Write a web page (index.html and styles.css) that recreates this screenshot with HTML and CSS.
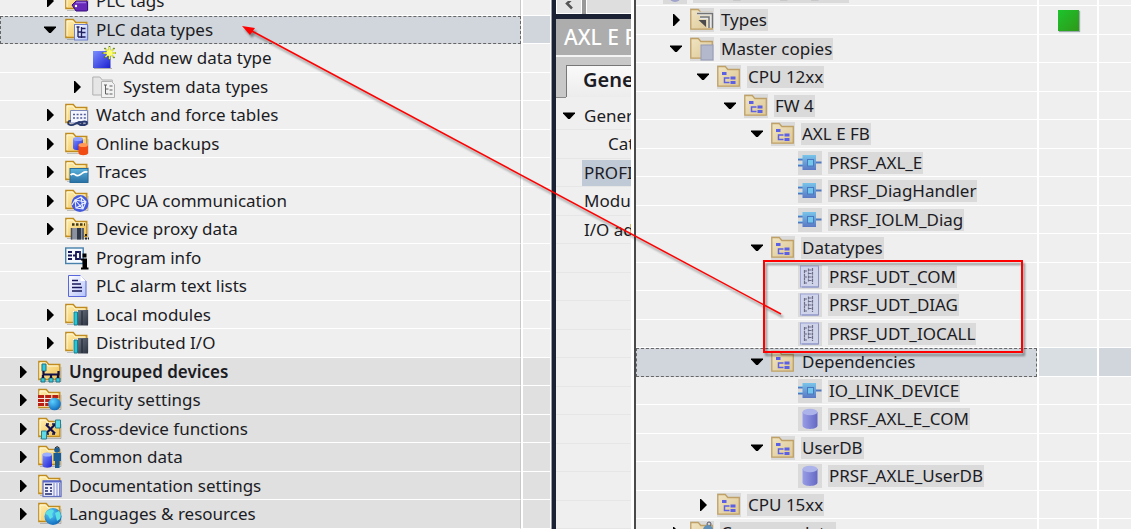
FILE: index.html
```html
<!DOCTYPE html>
<html lang="en">
<head>
<meta charset="utf-8">
<title>Project tree and library</title>
<link rel="stylesheet" href="styles.css">
</head>
<body>
<svg class="defs" aria-hidden="true">
  <defs>
    <linearGradient id="gold" x1="0" y1="0" x2="1" y2="1"><stop offset="0" stop-color="#fff0b4"/><stop offset="1" stop-color="#f0c050"/></linearGradient>
    <linearGradient id="pale" x1="0" y1="0" x2="1" y2="1"><stop offset="0" stop-color="#f0e4c2"/><stop offset="1" stop-color="#ddc896"/></linearGradient>
    <linearGradient id="blue" x1="0" y1="0" x2="1" y2="1"><stop offset="0" stop-color="#7c90ff"/><stop offset="1" stop-color="#1c20d0"/></linearGradient>
    <linearGradient id="fb" x1="0" y1="0" x2="0" y2="1"><stop offset="0" stop-color="#78c4ea"/><stop offset="1" stop-color="#5a78c4"/></linearGradient>
    <linearGradient id="cyl" x1="0" y1="0" x2="1" y2="0"><stop offset="0" stop-color="#9a9ee6"/><stop offset="1" stop-color="#6468c4"/></linearGradient>
    <linearGradient id="page" x1="0" y1="0" x2="1" y2="1"><stop offset="0" stop-color="#ffffff"/><stop offset="1" stop-color="#b4c2fa"/></linearGradient>
    <linearGradient id="slate" x1="0" y1="0" x2="1" y2="1"><stop offset="0" stop-color="#6a7282"/><stop offset="1" stop-color="#2c3340"/></linearGradient>
    <linearGradient id="wave" x1="0" y1="0" x2="0" y2="1"><stop offset="0" stop-color="#5cb4dc"/><stop offset="1" stop-color="#2870a4"/></linearGradient>
    <radialGradient id="globe" cx=".35" cy=".3" r=".8"><stop offset="0" stop-color="#5cd0ff"/><stop offset="1" stop-color="#0862b8"/></radialGradient>
    <symbol id="folder" viewBox="0 0 24 24"><path d="M2 21.500h21V7" fill="none" stroke="#0003"/><path d="M.8 19.500V1.500h7.500l2.500 3h11v15z" fill="url(#gold)" stroke="#c08c20" stroke-width="1.300"/><path d="M2 18V3h5.500l2.500 3h10" fill="none" stroke="#fff8d8"/></symbol>
    <symbol id="pfolder" viewBox="0 0 24 24"><path d="M.8 21.200V1.500h7.500l2.500 3h11.500v16.700z" fill="url(#pale)" stroke="#bfa066" stroke-width="1.300"/></symbol>
    <symbol id="group" viewBox="0 0 24 24"><use href="#pfolder"/><path d="M5 7h4.500v3H5zM13.500 11.500h5v3h-5zM13.500 16h5v3h-5z" fill="#5c60e4"/><path d="M12.500 13H7.500v4.500h5" fill="none" stroke="#5c60e4" stroke-width="1.500"/></symbol>
    <symbol id="block" viewBox="0 0 24 24"><path d="M0 8.500h5M0 14.500h5M17 11.500h6.500" stroke="#5078c0" stroke-width="2"/><path d="M0 7.500h5M0 13.500h5" stroke="#8cc4e8"/><rect x="4.500" y="4" width="13.500" height="15" fill="url(#fb)"/><rect x="9.500" y="8.500" width="6" height="6.500" fill="#72c6ec" stroke="#4878c0"/></symbol>
    <symbol id="udt" viewBox="0 0 24 24"><rect x="2.500" y="1" width="18" height="21" fill="#d0d4ea" stroke="#9ca4d4"/><path d="M20.500 2v20H4" fill="none" stroke="#8890c4"/><path d="M6.500 5v14M6.500 6H9M6.500 12H9M6.500 18H9M10.500 3.500v6M10.500 10.500v6M10.500 5H15M10.500 8.500H15M10.500 12H15M10.500 15.500H15M14.500 3v16" fill="none" stroke="#6c6c88" stroke-width="1.200" stroke-dasharray="3 .7"/></symbol>
    <symbol id="db" viewBox="0 0 24 24"><path d="M4.500 5v13.500c0 4.500 15 4.500 15 0V5z" fill="url(#cyl)"/><ellipse cx="12" cy="5" rx="7.500" ry="3.300" fill="#acb2ea"/></symbol>
    <symbol id="module" viewBox="0 0 24 24"><use href="#folder"/><path d="M8 8h6v14H8z" fill="#fff"/><path d="M9 9h3.500v13H9z" fill="#20c8d8" stroke="#207888"/><rect x="13" y="7" width="10" height="15.500" fill="url(#slate)"/><path d="M17 8v14" stroke="#1c222c"/></symbol>
    <symbol id="tags" viewBox="0 0 24 24"><use href="#folder"/><path d="M7 16l4-4h10.500q1 0 1 1v8q0 1-1 1H11z" fill="#6828b8" stroke="#35107c"/><path d="M11 13.500h10" stroke="#a070e0" stroke-width="1.500"/><circle cx="11" cy="17" r="1.200" fill="#fff"/></symbol>
    <symbol id="types" viewBox="0 0 24 24"><use href="#folder"/><rect x="9.500" y="6.500" width="13" height="15.500" fill="url(#page)" stroke="#7080c8"/><path d="M11.500 9h3M13 9v10M13 14h3M13 19h3M17 10.500h3.500M17 14.500h3.500M17 19h3.500M16.500 9v11" stroke="#202060" stroke-width="1.300" fill="none"/></symbol>
    <symbol id="gtypes" viewBox="0 0 24 24"><path d="M.8 20V2h7l2.500 3h10v15z" fill="#e6e6e6" stroke="#b0b0b0"/><path d="M9.500 6.500h10l3 3v13h-13z" fill="#f2f2f2" stroke="#b0b0b0"/><path d="M12 10h3M13.500 10v9M13.500 14h3M13.500 19h3M17.500 11h3M17.500 15h3M17.500 19h3" stroke="#606060" fill="none"/></symbol>
    <symbol id="new" viewBox="0 0 24 24"><path d="M2 22.500h18" stroke="#0004"/><rect x="1" y="5" width="17.500" height="17" fill="url(#blue)"/><path d="M17.500 0v14M10.500 7h14M12.500 2l10 10M22.500 2l-10 10" stroke="#587c1c" stroke-width="1.600"/><path d="M17.500 1v12M11.500 7h12M13.500 3l8 8M21.500 3l-8 8" stroke="#f4f440" stroke-width="1.300"/><circle cx="17.500" cy="7" r="3" fill="#ffff70"/></symbol>
    <symbol id="watch" viewBox="0 0 24 24"><use href="#folder"/><path d="M5.500 7.500h17V20h-17z" fill="#f4f6ff" stroke="#7c88b8"/><path d="M8 11.500h14M8 15h14" stroke="#505c98" stroke-width="1.500" stroke-dasharray="2 1.600"/><path d="M6 18c-3-1-4 3-1 4 4 1 5-2 7-2s2 2 4 2 2-3-1-3-2 1-3 1M16 20c1-2 6-2 6 0s-5 3-6 1" fill="none" stroke="#26386c" stroke-width="1.800"/></symbol>
    <symbol id="backup" viewBox="0 0 24 24"><use href="#folder"/><path d="M8 7v9c0 3 10 3 10 0V7z" fill="url(#blue)"/><ellipse cx="13" cy="7" rx="5" ry="2" fill="#8ea0ff"/><path d="M13.500 13v8c0 3 9.500 3 9.500 0v-8z" fill="#f04c14"/><ellipse cx="18.200" cy="13" rx="4.700" ry="2" fill="#ff9a58"/></symbol>
    <symbol id="trace" viewBox="0 0 24 24"><use href="#folder"/><rect x="5" y="8.500" width="18" height="14" fill="url(#wave)" stroke="#286c9c"/><path d="M5.500 15c5-4 4 3 9 0s4-4 8-3" fill="none" stroke="#fff" stroke-width="1.700"/></symbol>
    <symbol id="opc" viewBox="0 0 24 24"><use href="#folder"/><circle cx="15" cy="14.500" r="8.500" fill="#4458dc"/><path d="M10 11l6-3 5 5-3 7-7-1zM10 11l11 2M16 8l2 12M11 19l10-6M7 16l3-5 8 9" fill="none" stroke="#e4ecff" stroke-width="1.100"/></symbol>
    <symbol id="proxy" viewBox="0 0 24 24"><use href="#folder"/><path d="M7 7.500h13" stroke="#403818" stroke-width="2.500" stroke-dasharray="2.500 1.500"/><rect x="6" y="11" width="13" height="11.500" fill="#8c92a0"/><path d="M12 11h4v11.500h-4z" fill="#303848"/><path d="M6.500 11v11.500M18 11v11.500" stroke="#48505e" stroke-width="1.500"/><path d="M20 18h3M20 21.500h4" stroke="#222" stroke-width="2" stroke-dasharray="2 1"/></symbol>
    <symbol id="info" viewBox="0 0 24 24"><rect x=".7" y="2" width="17.500" height="15.500" fill="#f4faff" stroke="#4880ac" stroke-width="1.400"/><path d="M3 6h4M3 9.500h4M3 13h4M8 9.500h3M11 5v9M15 5v9M11 6h3M11 13h3" stroke="#181858" stroke-width="1.800"/><path d="M17.500 7.500h4v4h-4zM16 12.500h6v9h1.500v2H16v-2h1.500v-7H16z" fill="#000"/></symbol>
    <symbol id="list" viewBox="0 0 24 24"><path d="M3.500 1.500h12l5.500 5.500v15.500H3.500z" fill="url(#page)" stroke="#5868dc"/><path d="M15.500 1v6H21z" fill="#fff"/><path d="M7 6.500h6M7 10h9M7 13.500h10M7 17h10" stroke="#181858" stroke-width="1.700"/></symbol>
    <symbol id="devices" viewBox="0 0 24 24"><use href="#folder"/><path d="M4 4h4v7H4zM3 18h4v4H3zM11 18h4v4h-4zM18 18h4v4h-4z" fill="#30c8dc" stroke="#247080"/><path d="M5.500 11v3.500h15V11M5 15v3M13 15v3M20 15v3" fill="none" stroke="#101048" stroke-width="2.200"/></symbol>
    <symbol id="security" viewBox="0 0 24 24"><use href="#folder"/><path d="M0 7.500h14v11H0z" fill="#f6e4dc"/><path d="M0 8.500h22M0 12.500h14M0 16.500h14" stroke="#b82014" stroke-width="2.800" stroke-dasharray="6 1.200"/><circle cx="16.500" cy="16" r="6.300" fill="url(#globe)"/></symbol>
    <symbol id="cross" viewBox="0 0 24 24"><use href="#folder"/><path d="M8 7.500l9 9M17 7.500l-9 9" stroke="#101050" stroke-width="2.200"/><path d="M8 7h3M14 7h3M8 17h3M14 17h3" stroke="#101050" stroke-width="1.500"/><path d="M17.500 3h5v8h-5zM3.500 14h5v8h-5z" fill="#60dce8" stroke="#288090"/></symbol>
    <symbol id="common" viewBox="0 0 24 24"><use href="#folder"/><path d="M4.500 9.500v11c0 3 9.500 3 9.500 0v-11z" fill="url(#blue)"/><ellipse cx="9.200" cy="9.500" rx="4.700" ry="2" fill="#9cb0ff"/><circle cx="19" cy="5" r="2.800" fill="#1c5c94"/><path d="M15.500 8h7.500v8h-1.500v7H17v-7h-1.500z" fill="#1c5c94"/><path d="M17 3q2-3 4.500 0" fill="none" stroke="#222"/></symbol>
    <symbol id="docs" viewBox="0 0 24 24"><use href="#folder"/><rect x="5" y="7" width="18" height="15.500" fill="#eef0ff" stroke="#6470c0" stroke-width="1.300"/><path d="M7 10.500h7M7 14h3M7 17h3M7 20h7M12 14h2M12 17h2" stroke="#202868" stroke-width="1.600"/><path d="M16 9v13M19 9v13M21.500 9v13" stroke="#7c86cc"/><path d="M5 7.500h18" stroke="#5866c8" stroke-width="2"/></symbol>
    <symbol id="lang" viewBox="0 0 24 24"><use href="#folder"/><circle cx="15" cy="14.500" r="8.500" fill="url(#globe)"/><path d="M9 9q5-3 7 0l-2 3 1 3-3 2-2-4-3-1zM17 11l4-2q3 4 1 8l-3 2-1-4z" fill="#5ce0e4"/></symbol>
    <symbol id="libtypes" viewBox="0 0 24 24"><use href="#pfolder"/><path d="M7 5.500h15.500V20M10 9.500h9V20" fill="none" stroke="#e8e8e8" stroke-width="3.500"/><path d="M7 5.500h15.500V20M10 9h9v11" fill="none" stroke="#747474" stroke-width="1.500"/><path d="M8.500 12H16v7z" fill="#4c4c4c"/></symbol>
    <symbol id="master" viewBox="0 0 24 24"><use href="#pfolder"/><rect x="11" y="8" width="12" height="15" fill="#b4b8cc" stroke="#9499b4"/></symbol>
    <symbol id="libcommon" viewBox="0 0 24 24"><use href="#pfolder"/><circle cx="19" cy="3" r="2" fill="none" stroke="#556"/><circle cx="18" cy="9" r="5" fill="#6090b8"/></symbol>
    <symbol id="lib" viewBox="0 0 24 24"><circle cx="12" cy="16" r="6" fill="#a0a4cc"/></symbol>
    <symbol id="right" viewBox="0 0 12 12"><path d="M3 0h1l6 6-6 6H3z"/></symbol>
    <symbol id="down" viewBox="0 0 12 12"><path d="M0 2.500h12v1L6.800 9H5.200L0 3.500z"/></symbol>
  </defs>
</svg>

<main class="workspace">
  <nav class="tree project" aria-label="Project tree">
    <div class="row l2"><div class="name"><button class="toggle" aria-label="Expand PLC tags"><svg><use href="#right"/></svg></button><svg class="icon"><use href="#tags"/></svg><span class="label">PLC tags</span></div><div class="cell"></div></div>
    <div class="row l2 selected"><div class="name"><button class="toggle" aria-label="Collapse PLC data types"><svg><use href="#down"/></svg></button><svg class="icon"><use href="#types"/></svg><span class="label">PLC data types</span></div><div class="cell"></div></div>
    <div class="row l3"><div class="name"><span class="toggle"></span><svg class="icon"><use href="#new"/></svg><span class="label">Add new data type</span></div><div class="cell"></div></div>
    <div class="row l3"><div class="name"><button class="toggle" aria-label="Expand System data types"><svg><use href="#right"/></svg></button><svg class="icon"><use href="#gtypes"/></svg><span class="label">System data types</span></div><div class="cell"></div></div>
    <div class="row l2"><div class="name"><button class="toggle" aria-label="Expand Watch and force tables"><svg><use href="#right"/></svg></button><svg class="icon"><use href="#watch"/></svg><span class="label">Watch and force tables</span></div><div class="cell"></div></div>
    <div class="row l2"><div class="name"><button class="toggle" aria-label="Expand Online backups"><svg><use href="#right"/></svg></button><svg class="icon"><use href="#backup"/></svg><span class="label">Online backups</span></div><div class="cell"></div></div>
    <div class="row l2"><div class="name"><button class="toggle" aria-label="Expand Traces"><svg><use href="#right"/></svg></button><svg class="icon"><use href="#trace"/></svg><span class="label">Traces</span></div><div class="cell"></div></div>
    <div class="row l2"><div class="name"><button class="toggle" aria-label="Expand OPC UA communication"><svg><use href="#right"/></svg></button><svg class="icon"><use href="#opc"/></svg><span class="label">OPC UA communication</span></div><div class="cell"></div></div>
    <div class="row l2"><div class="name"><button class="toggle" aria-label="Expand Device proxy data"><svg><use href="#right"/></svg></button><svg class="icon"><use href="#proxy"/></svg><span class="label">Device proxy data</span></div><div class="cell"></div></div>
    <div class="row l2"><div class="name"><span class="toggle"></span><svg class="icon"><use href="#info"/></svg><span class="label">Program info</span></div><div class="cell"></div></div>
    <div class="row l2"><div class="name"><span class="toggle"></span><svg class="icon"><use href="#list"/></svg><span class="label">PLC alarm text lists</span></div><div class="cell"></div></div>
    <div class="row l2"><div class="name"><button class="toggle" aria-label="Expand Local modules"><svg><use href="#right"/></svg></button><svg class="icon"><use href="#module"/></svg><span class="label">Local modules</span></div><div class="cell"></div></div>
    <div class="row l2"><div class="name"><button class="toggle" aria-label="Expand Distributed I/O"><svg><use href="#right"/></svg></button><svg class="icon"><use href="#module"/></svg><span class="label">Distributed I/O</span></div><div class="cell"></div></div>
    <div class="row l1 top strong"><div class="name"><button class="toggle" aria-label="Expand Ungrouped devices"><svg><use href="#right"/></svg></button><svg class="icon"><use href="#devices"/></svg><span class="label">Ungrouped devices</span></div><div class="cell"></div></div>
    <div class="row l1 top"><div class="name"><button class="toggle" aria-label="Expand Security settings"><svg><use href="#right"/></svg></button><svg class="icon"><use href="#security"/></svg><span class="label">Security settings</span></div><div class="cell"></div></div>
    <div class="row l1 top"><div class="name"><button class="toggle" aria-label="Expand Cross-device functions"><svg><use href="#right"/></svg></button><svg class="icon"><use href="#cross"/></svg><span class="label">Cross-device functions</span></div><div class="cell"></div></div>
    <div class="row l1 top"><div class="name"><button class="toggle" aria-label="Expand Common data"><svg><use href="#right"/></svg></button><svg class="icon"><use href="#common"/></svg><span class="label">Common data</span></div><div class="cell"></div></div>
    <div class="row l1 top"><div class="name"><button class="toggle" aria-label="Expand Documentation settings"><svg><use href="#right"/></svg></button><svg class="icon"><use href="#docs"/></svg><span class="label">Documentation settings</span></div><div class="cell"></div></div>
    <div class="row l1 top"><div class="name"><button class="toggle" aria-label="Expand Languages and resources"><svg><use href="#right"/></svg></button><svg class="icon"><use href="#lang"/></svg><span class="label">Languages &amp; resources</span></div><div class="cell"></div></div>
  </nav>

  <div class="splitter"></div>

  <section class="inspector" aria-label="Properties">
    <div class="scrollbar"><button class="scroll-left" aria-label="Scroll left"><svg viewBox="0 0 12 12"><path d="M9-2L4 2.500l5 5" fill="none" stroke="#555" stroke-width="2.500"/></svg></button><div class="thumb"></div></div>
    <h2 class="title">AXL E FB</h2>
    <div class="tabs"><button class="tab">General</button></div>
    <div class="sections">
      <div class="section"><button class="toggle" aria-label="Collapse General"><svg><use href="#down"/></svg></button><span class="item">General</span></div>
      <div class="section"><span class="toggle"></span><span class="item nested">Catalog</span></div>
      <div class="section"><span class="toggle"></span><span class="item current">PROFIsafe</span></div>
      <div class="section"><span class="toggle"></span><span class="item">Module</span></div>
      <div class="section"><span class="toggle"></span><span class="item">I/O addresses</span></div>
      <div class="section"></div><div class="section"></div><div class="section"></div><div class="section"></div><div class="section"></div>
      <div class="section"></div><div class="section"></div><div class="section"></div><div class="section"></div><div class="section"></div>
    </div>
  </section>

  <div class="edge"></div>

  <nav class="tree library" aria-label="Library">
    <div class="row l0"><div class="name"><span class="toggle"></span><svg class="icon"><use href="#lib"/></svg><span class="label">PRSF_AXLE_Lib_V15</span></div><div class="cell"></div><div class="cell last"></div></div>
    <div class="row l1"><div class="name"><button class="toggle" aria-label="Expand Types"><svg><use href="#right"/></svg></button><svg class="icon"><use href="#libtypes"/></svg><span class="label">Types</span></div><div class="cell"><span class="status"></span></div><div class="cell last"></div></div>
    <div class="row l1"><div class="name"><button class="toggle" aria-label="Collapse Master copies"><svg><use href="#down"/></svg></button><svg class="icon"><use href="#master"/></svg><span class="label">Master copies</span></div><div class="cell"></div><div class="cell last"></div></div>
    <div class="row l2"><div class="name"><button class="toggle" aria-label="Collapse CPU 12xx"><svg><use href="#down"/></svg></button><svg class="icon"><use href="#group"/></svg><span class="label">CPU 12xx</span></div><div class="cell"></div><div class="cell last"></div></div>
    <div class="row l3"><div class="name"><button class="toggle" aria-label="Collapse FW 4"><svg><use href="#down"/></svg></button><svg class="icon"><use href="#group"/></svg><span class="label">FW 4</span></div><div class="cell"></div><div class="cell last"></div></div>
    <div class="row l4"><div class="name"><button class="toggle" aria-label="Collapse AXL E FB"><svg><use href="#down"/></svg></button><svg class="icon"><use href="#group"/></svg><span class="label">AXL E FB</span></div><div class="cell"></div><div class="cell last"></div></div>
    <div class="row l5"><div class="name"><span class="toggle"></span><svg class="icon"><use href="#block"/></svg><span class="label">PRSF_AXL_E</span></div><div class="cell"></div><div class="cell last"></div></div>
    <div class="row l5"><div class="name"><span class="toggle"></span><svg class="icon"><use href="#block"/></svg><span class="label">PRSF_DiagHandler</span></div><div class="cell"></div><div class="cell last"></div></div>
    <div class="row l5"><div class="name"><span class="toggle"></span><svg class="icon"><use href="#block"/></svg><span class="label">PRSF_IOLM_Diag</span></div><div class="cell"></div><div class="cell last"></div></div>
    <div class="row l4"><div class="name"><button class="toggle" aria-label="Collapse Datatypes"><svg><use href="#down"/></svg></button><svg class="icon"><use href="#group"/></svg><span class="label">Datatypes</span></div><div class="cell"></div><div class="cell last"></div></div>
    <div class="row l5"><div class="name"><span class="toggle"></span><svg class="icon"><use href="#udt"/></svg><span class="label">PRSF_UDT_COM</span></div><div class="cell"></div><div class="cell last"></div></div>
    <div class="row l5"><div class="name"><span class="toggle"></span><svg class="icon"><use href="#udt"/></svg><span class="label">PRSF_UDT_DIAG</span></div><div class="cell"></div><div class="cell last"></div></div>
    <div class="row l5"><div class="name"><span class="toggle"></span><svg class="icon"><use href="#udt"/></svg><span class="label">PRSF_UDT_IOCALL</span></div><div class="cell"></div><div class="cell last"></div></div>
    <div class="row l4 selected"><div class="name"><button class="toggle" aria-label="Collapse Dependencies"><svg><use href="#down"/></svg></button><svg class="icon"><use href="#group"/></svg><span class="label">Dependencies</span></div><div class="cell"></div><div class="cell last"></div></div>
    <div class="row l5"><div class="name"><span class="toggle"></span><svg class="icon"><use href="#block"/></svg><span class="label">IO_LINK_DEVICE</span></div><div class="cell"></div><div class="cell last"></div></div>
    <div class="row l5"><div class="name"><span class="toggle"></span><svg class="icon"><use href="#db"/></svg><span class="label">PRSF_AXL_E_COM</span></div><div class="cell"></div><div class="cell last"></div></div>
    <div class="row l4"><div class="name"><button class="toggle" aria-label="Collapse UserDB"><svg><use href="#down"/></svg></button><svg class="icon"><use href="#group"/></svg><span class="label">UserDB</span></div><div class="cell"></div><div class="cell last"></div></div>
    <div class="row l5"><div class="name"><span class="toggle"></span><svg class="icon"><use href="#db"/></svg><span class="label">PRSF_AXLE_UserDB</span></div><div class="cell"></div><div class="cell last"></div></div>
    <div class="row l2"><div class="name"><button class="toggle" aria-label="Expand CPU 15xx"><svg><use href="#right"/></svg></button><svg class="icon"><use href="#group"/></svg><span class="label">CPU 15xx</span></div><div class="cell"></div><div class="cell last"></div></div>
    <div class="row l1"><div class="name"><button class="toggle" aria-label="Expand Common data"><svg><use href="#right"/></svg></button><svg class="icon"><use href="#libcommon"/></svg><span class="label">Common data</span></div><div class="cell"></div><div class="cell last"></div></div>
  </nav>

  <svg class="annotation" viewBox="0 0 1131 529" preserveAspectRatio="none" aria-hidden="true">
    <rect x="764" y="261" width="258" height="91" fill="none" stroke="#f00" stroke-width="2"/>
    <path d="M781 314L250 30" stroke="#f00" stroke-width="1.500"/>
    <path d="M242 26l13 2-5 7z" fill="#f00"/>
  </svg>
</main>
</body>
</html>
```
FILE: styles.css
```css
* { box-sizing: border-box; }

body {
  margin: 0;
  font-family: "Noto Sans", "Open Sans", sans-serif;
  font-size: 17px;
  line-height: 22px;
  color: #1c1c24;
  background: #efefef;
}

button {
  margin: 0;
  padding: 0;
  border: 0;
  background: none;
  font: inherit;
  color: inherit;
}

.defs { position: absolute; width: 0; height: 0; }

.workspace {
  position: relative;
  display: grid;
  grid-template-columns: minmax(0, 551fr) 5px minmax(0, 75fr) 5px minmax(0, 495fr);
  height: 100vh;
  overflow: hidden;
}

.tree { overflow: hidden; }

.row {
  display: flex;
  height: 28px;
}

.project .row:first-child { margin-top: -13px; }
.project .row:nth-child(odd) { height: 29px; }
.library .row:first-child { margin-top: -22px; }
.library .row:nth-child(even) { height: 29px; }

.name {
  flex: 1;
  min-width: 0;
  display: flex;
  align-items: center;
  border-bottom: 1px solid #fff;
  white-space: nowrap;
}

.cell {
  flex: none;
  display: flex;
  align-items: center;
  justify-content: center;
  border-bottom: 1px solid #fff;
}

.project .l1 .name { padding-left: 13px; }
.project .l2 .name { padding-left: 40px; }
.project .l3 .name { padding-left: 67px; }
.library .l0 .name { padding-left: 3px; }
.library .l1 .name { padding-left: 30px; }
.library .l2 .name { padding-left: 57px; }
.library .l3 .name { padding-left: 84px; }
.library .l4 .name { padding-left: 111px; }
.library .l5 .name { padding-left: 138px; }

.toggle {
  flex: none;
  display: flex;
  justify-content: center;
  width: 20px;
}

.toggle svg { width: 12px; height: 12px; fill: #000; }

.icon {
  flex: none;
  width: 24px;
  height: 24px;
  margin: 0 6px 0 5px;
}

.library .icon { margin: 0 6px 0 4px; }

.label { padding: 0 1px; }

.project .name { border-right: 1px solid #c8c8c8; }

.project .cell {
  width: 30px;
  border-left: 2px solid #fff;
  border-right: 1px solid #fff;
}

.top { background: #e0e0e0; }
.strong { font-weight: 600; }
.selected { background: #d0d6db; }

.selected .name {
  outline: 1px dashed #666;
  outline-offset: -1px;
  border-bottom-color: #d0d6db;
}

.splitter {
  background: #1b2233;
  border-left: 1px solid #9a9ea8;
}

.inspector {
  display: flex;
  flex-direction: column;
  overflow: hidden;
  white-space: nowrap;
}

.scrollbar {
  display: flex;
  gap: 4px;
  height: 19px;
  border-bottom: 5px solid #1b2233;
  background: #999;
}

.scroll-left {
  flex: none;
  width: 26px;
  border: 1px solid #fff;
  border-top: 0;
  background: #e4e4e4;
}

.scroll-left svg { display: block; width: 12px; height: 12px; margin-left: 6px; }

.thumb {
  flex: 1;
  border-left: 1px solid #fff;
  border-bottom: 1px solid #fff;
  background: #dedede;
}

.title {
  margin: 0;
  height: 38px;
  padding-left: 8px;
  border-bottom: 2px solid #f4f4f4;
  background: #adadad;
  color: #fff;
  font-size: 21px;
  font-weight: 500;
  line-height: 37px;
}

.tabs {
  display: flex;
  height: 40px;
  padding-top: 8px;
  background: #c8c8c8;
}

.tabs::before {
  content: "";
  flex: none;
  width: 10px;
  height: 32px;
  border-bottom: 1px solid #888;
}

.tab {
  flex: 1;
  min-width: 0;
  padding: 0 0 4px 16px;
  border-left: 1px solid #777;
  border-top: 1px solid #777;
  background: linear-gradient(#fafafa, #ececec);
  font-size: 20px;
  font-weight: 600;
  text-align: left;
}

.sections { padding-top: 5px; }

.section {
  display: flex;
  align-items: center;
  height: 28px;
  padding-left: 3px;
  border-bottom: 1px solid #e6e6e6;
}

.section:nth-child(even) { height: 29px; }

.item {
  flex: 1;
  margin-left: 3px;
  padding: 2px 0 2px 2px;
}

.item.nested { padding-left: 26px; }
.item.current { background: #c0cad6; }

.edge {
  background: #fff;
  border-right: 2px solid #4a4a4a;
}

.library .icon, .library .label { background: #dadada; }
.library .selected .icon, .library .selected .label { background: none; }

.library .cell {
  width: 60px;
  border-left: 2px solid #fff;
}

.library .cell.last { width: 34px; }
.library .selected .cell:not(.last) { background: #d9dee2; }

.status {
  width: 21px;
  height: 21px;
  background: linear-gradient(135deg, #1cc42c, #30981a);
  box-shadow: 1px 1px 1px #9aa;
}

.annotation {
  position: absolute;
  inset: 0;
  width: 100%;
  height: 100%;
  pointer-events: none;
  filter: drop-shadow(2px 3px 1px #0006);
}
```
